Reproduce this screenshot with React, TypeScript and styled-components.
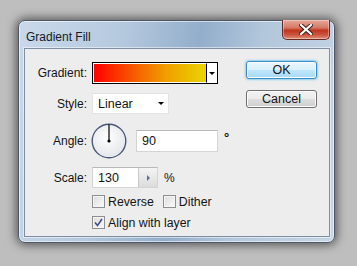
import React from "react";
import styled, { createGlobalStyle } from "styled-components";

const Global = createGlobalStyle`
  html, body { margin: 0; padding: 0; background: #bebebe; }
  body { font-family: "Liberation Sans", Arial, sans-serif; font-size: 12px; color: #141414; }
`;

const Page = styled.div`
  width: 357px;
  height: 266px;
  padding: 20px 0 0 18px;
  box-sizing: border-box;
  overflow: hidden;
`;

const Window = styled.div`
  width: 317px;
  height: 223px;
  box-sizing: border-box;
  border: 1px solid #4e5866;
  border-radius: 7px;
  padding: 0 4px 5px 5px;
  display: flex;
  flex-direction: column;
  background: linear-gradient(100deg, #c9d9ea 0%, #b5c9de 30%, #93aecb 52%, #b3c7dc 70%, #c6d6e6 100%);
  box-shadow: 0 0 10px 2px rgba(0, 0, 0, 0.55), inset 0 0 0 1px rgba(255, 255, 255, 0.55);
`;

const TitleBar = styled.div`
  height: 27px;
  display: flex;
  align-items: flex-start;
  justify-content: space-between;
`;

const Title = styled.div`
  padding: 9px 0 0 2px;
  font-size: 12px;
  color: #141a24;
`;

const CloseButton = styled.div`
  margin-top: -1px;
  width: 48px;
  height: 20px;
  box-sizing: border-box;
  border: 1px solid #6e2a22;
  border-top: none;
  border-radius: 0 0 5px 5px;
  background: linear-gradient(to bottom, #e6a898 0%, #d67a66 40%, #bf3620 55%, #cc5840 80%, #de9480 100%);
  box-shadow: inset 0 0 0 1px rgba(255, 255, 255, 0.35);
  display: flex;
  align-items: center;
  justify-content: center;
`;

const Panel = styled.div`
  flex: 1;
  display: flex;
  background: #ededed;
  border: 1px solid #7e8fa3;
  box-shadow: 0 0 0 1px rgba(255, 255, 255, 0.5);
  padding-top: 12px;
`;

const Form = styled.div`
  display: flex;
  flex-direction: column;
`;

const Row = styled.div<{ $top: number; $h: number; $indent?: number }>`
  display: flex;
  align-items: center;
  margin-top: ${(p) => p.$top}px;
  height: ${(p) => p.$h}px;
  padding-left: ${(p) => p.$indent ?? 0}px;
`;

const Label = styled.div`
  width: 62px;
  margin-right: 5px;
  text-align: right;
`;

const GradientSwatch = styled.div`
  width: 126px;
  height: 22px;
  box-sizing: border-box;
  border: 1px solid #000;
  display: flex;
  background: #fff;
`;

const GradientBar = styled.div`
  flex: 1;
  border: 1px solid #fff;
  background: linear-gradient(to right, #ff0000 0%, #f65a00 35%, #efa000 65%, #e8d600 100%);
  border-right: 1px solid #000;
`;

const ArrowCell = styled.div<{ $w: number }>`
  width: ${(p) => p.$w}px;
  display: flex;
  align-items: center;
  justify-content: center;
`;

const Arrow = styled.div`
  width: 0;
  height: 0;
  border-left: 3px solid transparent;
  border-right: 3px solid transparent;
  border-top: 3px solid #000;
`;

const Select = styled.div`
  width: 77px;
  height: 21px;
  box-sizing: border-box;
  background: #fff;
  border: 1px solid #e2e2e2;
  display: flex;
  align-items: center;
  padding-left: 5px;
  font-size: 12.5px;
`;

const SelectText = styled.div`
  flex: 1;
`;

const Dial = styled.svg`
  margin-left: -1px;
`;

const TextInput = styled.div<{ $w: number; $ml?: number }>`
  width: ${(p) => p.$w}px;
  height: 22px;
  margin-left: ${(p) => p.$ml ?? 0}px;
  box-sizing: border-box;
  background: #fff;
  border: 1px solid #d4d4d4;
  border-top-color: #b8b8b8;
  display: flex;
  align-items: center;
  padding-left: 5px;
  font-size: 12.5px;
`;

const Unit = styled.div<{ $ml: number; $raise?: number; $size?: number }>`
  margin-left: ${(p) => p.$ml}px;
  position: relative;
  top: ${(p) => -(p.$raise ?? 0)}px;
  font-size: ${(p) => p.$size ?? 12}px;
  font-weight: ${(p) => (p.$size ? 700 : 400)};
`;

const Spin = styled.div`
  display: flex;
  height: 21px;
  box-sizing: border-box;
  border: 1px solid #d4d4d4;
  border-top-color: #b8b8b8;
  background: #fff;
`;

const SpinText = styled.div`
  width: 40px;
  padding-left: 5px;
  display: flex;
  align-items: center;
  font-size: 12.5px;
`;

const SpinButton = styled.div`
  width: 19px;
  box-sizing: border-box;
  border-left: 1px solid #c8c8c8;
  background: linear-gradient(to bottom, #f4f4f4, #dcdcdc);
  display: flex;
  align-items: center;
  justify-content: center;
`;

const SpinArrow = styled.div`
  width: 0;
  height: 0;
  border-top: 3px solid transparent;
  border-bottom: 3px solid transparent;
  border-left: 3px solid #5a6f8e;
`;

const Check = styled.div<{ $mr?: number }>`
  display: flex;
  align-items: center;
  margin-right: ${(p) => p.$mr ?? 0}px;
`;

const Box = styled.div`
  width: 13px;
  height: 13px;
  box-sizing: border-box;
  border: 1px solid #8f8f8f;
  background: linear-gradient(135deg, #dcdcdc, #fbfbfb);
  box-shadow: inset 0 0 0 1px #f4f4f4;
  margin-right: 3px;
  display: flex;
  align-items: center;
  justify-content: center;
`;

const CheckText = styled.div`
  font-size: 12.3px;
`;

const Buttons = styled.div`
  margin-left: auto;
  margin-right: 12px;
  display: flex;
  flex-direction: column;
  gap: 11px;
`;

const Button = styled.div<{ $primary?: boolean }>`
  width: 71px;
  height: 18px;
  box-sizing: border-box;
  border-radius: 3px;
  display: flex;
  align-items: center;
  justify-content: center;
  font-size: 12.5px;
  border: 1px solid ${(p) => (p.$primary ? "#3a8ac4" : "#707070")};
  background: ${(p) =>
    p.$primary
      ? "linear-gradient(to bottom, #eaf6fd 0%, #d9f0fc 50%, #bee6fd 51%, #a7d9f5 100%)"
      : "linear-gradient(to bottom, #f2f2f2 0%, #ebebeb 50%, #dddddd 51%, #cfcfcf 100%)"};
  box-shadow: ${(p) => (p.$primary ? "0 0 2px 1px #8ed0f5, inset 0 0 0 1px #fff" : "inset 0 0 0 1px #fcfcfc")};
`;

export default function App() {
  return (
    <>
      <Global />
      <Page>
        <Window>
          <TitleBar>
            <Title>Gradient Fill</Title>
            <CloseButton>
              <svg width="14" height="11" viewBox="0 0 14 11">
                <path d="M2 1 L12 10 M12 1 L2 10" stroke="#3c1a16" strokeWidth="4" strokeLinecap="square" />
                <path d="M2 1 L12 10 M12 1 L2 10" stroke="#ffffff" strokeWidth="2.2" strokeLinecap="square" />
              </svg>
            </CloseButton>
          </TitleBar>
          <Panel>
            <Form>
              <Row $top={1} $h={22}>
                <Label>Gradient:</Label>
                <GradientSwatch>
                  <GradientBar />
                  <ArrowCell $w={10}>
                    <Arrow />
                  </ArrowCell>
                </GradientSwatch>
              </Row>
              <Row $top={9} $h={21}>
                <Label>Style:</Label>
                <Select>
                  <SelectText>Linear</SelectText>
                  <ArrowCell $w={14}>
                    <Arrow />
                  </ArrowCell>
                </Select>
              </Row>
              <Row $top={9} $h={35}>
                <Label>Angle:</Label>
                <Dial width="36" height="36" viewBox="0 0 36 36">
                  <defs>
                    <radialGradient id="dialFill" cx="45%" cy="40%" r="65%">
                      <stop offset="0%" stopColor="#ffffff" />
                      <stop offset="100%" stopColor="#e2e4e8" />
                    </radialGradient>
                  </defs>
                  <circle cx="18" cy="18" r="16.8" fill="url(#dialFill)" stroke="#4a5878" strokeWidth="1.4" />
                  <line x1="18" y1="1.5" x2="18" y2="18" stroke="#000" strokeWidth="1.2" />
                  <circle cx="18" cy="18" r="1.6" fill="#000" />
                </Dial>
                <TextInput $w={82} $ml={9}>90</TextInput>
                <Unit $ml={6} $raise={3} $size={13}>°</Unit>
              </Row>
              <Row $top={9} $h={21}>
                <Label>Scale:</Label>
                <Spin>
                  <SpinText>130</SpinText>
                  <SpinButton>
                    <SpinArrow />
                  </SpinButton>
                </Spin>
                <Unit $ml={6}>%</Unit>
              </Row>
              <Row $top={7} $h={13} $indent={67}>
                <Check $mr={9}>
                  <Box />
                  <CheckText>Reverse</CheckText>
                </Check>
                <Check>
                  <Box />
                  <CheckText>Dither</CheckText>
                </Check>
              </Row>
              <Row $top={8} $h={13} $indent={67}>
                <Check>
                  <Box>
                    <svg width="9" height="9" viewBox="0 0 9 9">
                      <path d="M1 4.5 L3.5 7.5 L8 1" fill="none" stroke="#3d4f8f" strokeWidth="1.6" />
                    </svg>
                  </Box>
                  <CheckText>Align with layer</CheckText>
                </Check>
              </Row>
            </Form>
            <Buttons>
              <Button $primary>OK</Button>
              <Button>Cancel</Button>
            </Buttons>
          </Panel>
        </Window>
      </Page>
    </>
  );
}
